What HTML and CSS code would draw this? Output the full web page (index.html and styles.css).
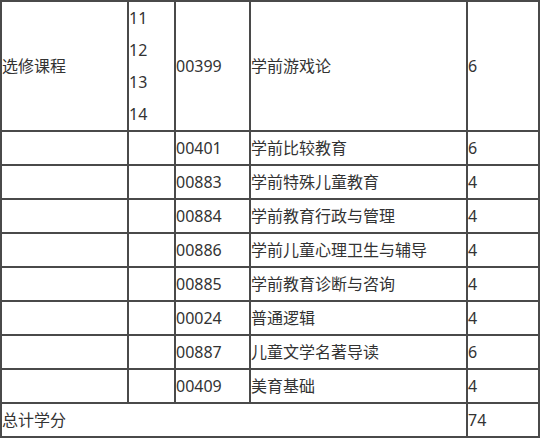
FILE: index.html
```html
<!DOCTYPE html>
<html>
<head>
<meta charset="utf-8">
<link rel="stylesheet" href="styles.css">
</head>
<body>
<table class="grid">
  <tr class="first">
    <td class="c1">选修课程</td>
    <td class="c2"><p>11</p><p>12</p><p>13</p><p>14</p></td>
    <td class="c3">00399</td>
    <td class="c4">学前游戏论</td>
    <td class="c5">6</td>
  </tr>
  <tr><td></td><td></td><td>00401</td><td>学前比较教育</td><td>6</td></tr>
  <tr><td></td><td></td><td>00883</td><td>学前特殊儿童教育</td><td>4</td></tr>
  <tr><td></td><td></td><td>00884</td><td>学前教育行政与管理</td><td>4</td></tr>
  <tr><td></td><td></td><td>00886</td><td>学前儿童心理卫生与辅导</td><td>4</td></tr>
  <tr><td></td><td></td><td>00885</td><td>学前教育诊断与咨询</td><td>4</td></tr>
  <tr><td></td><td></td><td>00024</td><td>普通逻辑</td><td>4</td></tr>
  <tr><td></td><td></td><td>00887</td><td>儿童文学名著导读</td><td>6</td></tr>
  <tr><td></td><td></td><td>00409</td><td>美育基础</td><td>4</td></tr>
  <tr><td colspan="4">总计学分</td><td>74</td></tr>
</table>
</body>
</html>
```
FILE: styles.css
```css
html, body {
  margin: 0;
  padding: 0;
  background: #ffffff;
}
.grid {
  width: 540px;
  table-layout: fixed;
  border-collapse: separate;
  border-spacing: 0;
  border: 1px solid #4a4a4a;
  font-family: "Noto Sans", "Noto Sans CJK SC", sans-serif;
  font-size: 16px;
  color: #333333;
}
.grid td {
  box-sizing: border-box;
  border: 1px solid #4a4a4a;
  padding: 0;
  height: 34px;
  line-height: 20px;
  vertical-align: middle;
  text-align: left;
  white-space: nowrap;
}
.grid tr.first td {
  height: 130px;
}
.c1 { width: 127px; }
.c2 { width: 47px; }
.c3 { width: 75px; }
.c4 { width: 217px; }
.c5 { width: 72px; }
.c2 p {
  margin: 0;
  line-height: 32px;
}
```
